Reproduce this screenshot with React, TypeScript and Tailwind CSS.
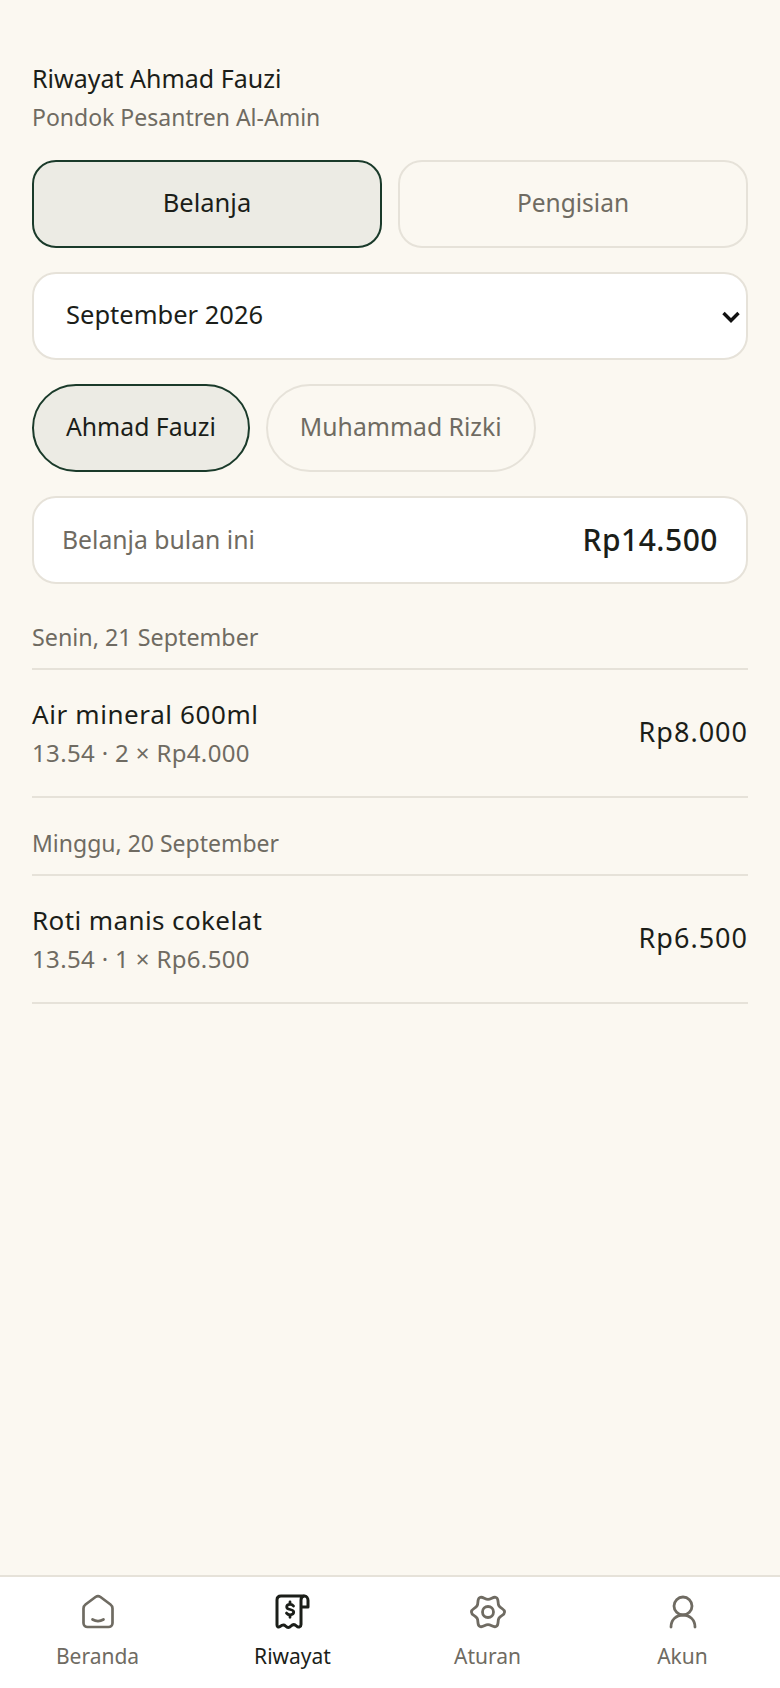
import { ReactNode } from 'react';

const gearPath = (() => {
  const c = 18;
  const pt = (deg: number, r: number) => [
    c + r * Math.cos((deg * Math.PI) / 180),
    c + r * Math.sin((deg * Math.PI) / 180),
  ];
  const tan = (deg: number, len: number, r: number) => {
    const p = pt(deg, r);
    const a = ((deg + 90) * Math.PI) / 180;
    return [p[0] + len * Math.cos(a), p[1] + len * Math.sin(a)];
  };
  let d = `M${pt(0, 16.6).join(' ')}`;
  for (let i = 0; i < 12; i++) {
    const a = i * 30;
    const b = a + 30;
    const ra = i % 2 === 0 ? 16.6 : 12.6;
    const rb = i % 2 === 0 ? 12.6 : 16.6;
    d += `C${tan(a, 3.3, ra).join(' ')} ${tan(b, -3.3, rb).join(' ')} ${pt(b, rb).join(' ')}`;
  }
  return d + 'Z';
})();

function HomeIcon() {
  return (
    <svg width="36" height="36" viewBox="0 0 36 36" fill="none" stroke="currentColor" strokeWidth="2.7" strokeLinecap="round" strokeLinejoin="round">
      <path d="M3.500 14.500c0-1.600.7-3 2-4l10-7.500c1.500-1 3.500-1 5 0l10 7.500c1.300 1 2 2.400 2 4V29c0 2.500-2 4-4 4H7.500c-2 0-4-1.500-4-4z" />
      <path d="M12.500 25.500c3.500 2 7.500 2 11 0" />
    </svg>
  );
}

function ReceiptIcon() {
  return (
    <svg width="36" height="36" viewBox="0 0 36 36" fill="none" stroke="currentColor" strokeWidth="3" strokeLinecap="round" strokeLinejoin="round">
      <path d="M29 2H6C3.500 2 2 3.500 2 6v25c0 1.800 1.500 2.500 3 1.500 2-1.500 3.500-2.500 5.500-.5s3.500 2 5.500 0 3.500-2 5.500 0 4.500 1 4.500-1.500V6c0-2.500 1.500-4 3.500-4s3.500 2 3.500 4.500V13h-7" />
      <path d="M18.500 12c-.8-1.200-2-1.700-3.400-1.700-2 0-3.400 1-3.400 2.600 0 3.600 7 1.600 7 5.200 0 1.700-1.600 2.700-3.600 2.700-1.500 0-2.800-.6-3.600-1.700M15 8v2.300M15 21v2.300" strokeWidth="2.800" />
    </svg>
  );
}

function GearIcon() {
  return (
    <svg width="36" height="36" viewBox="0 0 36 36" fill="none" stroke="currentColor" strokeWidth="2.8" strokeLinecap="round" strokeLinejoin="round">
      <path d={gearPath} />
      <circle cx="18" cy="18" r="5.500" />
    </svg>
  );
}

function UserIcon() {
  return (
    <svg width="36" height="36" viewBox="0 0 36 36" fill="none" stroke="currentColor" strokeWidth="2.800" strokeLinecap="round" strokeLinejoin="round">
      <circle cx="18" cy="12" r="9" />
      <path d="M6 33c0-7 5-12 12-12s12 5 12 12" />
    </svg>
  );
}

function Transaction({ date, dateClass, name, nameClass, meta, total }: { date: string; dateClass: string; name: string; nameClass: string; meta: string; total: string }) {
  return (
    <section>
      <div className={`flex items-end pb-[16px] leading-[30px] text-[#6f6b62] border-b-2 border-[#e6e2d9] ${dateClass}`}>
        {date}
      </div>
      <div className="h-[128px] pb-[2px] flex items-center justify-between border-b-2 border-[#e6e2d9]">
        <div>
          <div className={`leading-[36px] text-[#1b1e19] ${nameClass}`}>{name}</div>
          <div className="mt-[6px] text-[24px] tracking-[0.35px] leading-[30px] text-[#6f6b62]">{meta}</div>
        </div>
        <div className="text-[27px] tracking-[1px] leading-[36px] text-[#1b1e19]">{total}</div>
      </div>
    </section>
  );
}

function NavItem({ icon, label, active }: { icon: ReactNode; label: string; active?: boolean }) {
  return (
    <div className={`flex flex-col items-center ${active ? 'text-[#1b1e19]' : 'text-[#6f6b62]'}`}>
      {icon}
      <span className="mt-[12px] text-[21px] leading-[28px]">{label}</span>
    </div>
  );
}

export default function App() {
  return (
    <div className="h-[1688px] flex flex-col bg-[#fbf8f1] font-['Noto_Sans',sans-serif]">
      <main className="flex-1 px-[32px] pt-[59px]">
        <h1 className="text-[25px] leading-[39px] text-[#1b1e19]">Riwayat Ahmad Fauzi</h1>
        <p className="text-[23px] leading-[38px] text-[#6f6b62]">Pondok Pesantren Al-Amin</p>

        <div className="mt-[24px] grid grid-cols-2 gap-[16px]">
          <button className="h-[88px] pb-[3px] rounded-[24px] border-2 border-[#1a3a2a] bg-[#ecebe4] text-[25.500px] text-[#1b1e19]">Belanja</button>
          <button className="h-[88px] pb-[2px] rounded-[24px] border-2 border-[#e6e2d9] text-[24.500px] text-[#6f6b62]">Pengisian</button>
        </div>

        <div className="relative mt-[24px]">
          <select className="w-full h-[88px] pb-[3px] appearance-none rounded-[24px] border-2 border-[#e6e2d9] bg-white px-[32px] text-[25.500px] text-[#1b1e19]">
            <option>September 2026</option>
          </select>
          <svg className="absolute right-[7px] top-[35px] pointer-events-none" width="20" height="20" viewBox="0 0 20 20" fill="none" stroke="#111" strokeWidth="3.400">
            <path d="M2.500 6l7.500 7.500L17.500 6" />
          </svg>
        </div>

        <div className="mt-[24px] flex gap-[16px]">
          <button className="h-[88px] pb-[2px] px-[32px] rounded-full border-2 border-[#1a3a2a] bg-[#ecebe4] text-[24.750px] text-[#1b1e19]">Ahmad Fauzi</button>
          <button className="h-[88px] pb-[2px] px-[32px] rounded-full border-2 border-[#e6e2d9] text-[24.750px] text-[#6f6b62]">Muhammad Rizki</button>
        </div>

        <div className="mt-[24px] h-[88px] px-[28px] flex items-center justify-between rounded-[24px] border-2 border-[#e6e2d9] bg-white">
          <span className="text-[24.750px] text-[#6f6b62]">Belanja bulan ini</span>
          <span className="pb-[2px] text-[30px] tracking-[0.5px] font-medium text-[#1b1e19]">Rp14.500</span>
        </div>

        <div className="mt-[9px]">
          <div className="pt-[29px]">
            <Transaction date="Senin, 21 September" dateClass="text-[23.300px]" name="Air mineral 600ml" nameClass="text-[26px] tracking-[0.6px]" meta="13.54 · 2 × Rp4.000" total="Rp8.000" />
          </div>
          <div className="pt-[30px]">
            <Transaction date="Minggu, 20 September" dateClass="text-[23px]" name="Roti manis cokelat" nameClass="text-[26px] tracking-[0.4px]" meta="13.54 · 1 × Rp6.500" total="Rp6.500" />
          </div>
        </div>
      </main>

      <nav className="h-[113px] pt-[17px] grid grid-cols-4 bg-white border-t-2 border-[#e6e2d9]">
        <NavItem icon={<HomeIcon />} label="Beranda" />
        <NavItem icon={<ReceiptIcon />} label="Riwayat" active />
        <NavItem icon={<GearIcon />} label="Aturan" />
        <NavItem icon={<UserIcon />} label="Akun" />
      </nav>
    </div>
  );
}
